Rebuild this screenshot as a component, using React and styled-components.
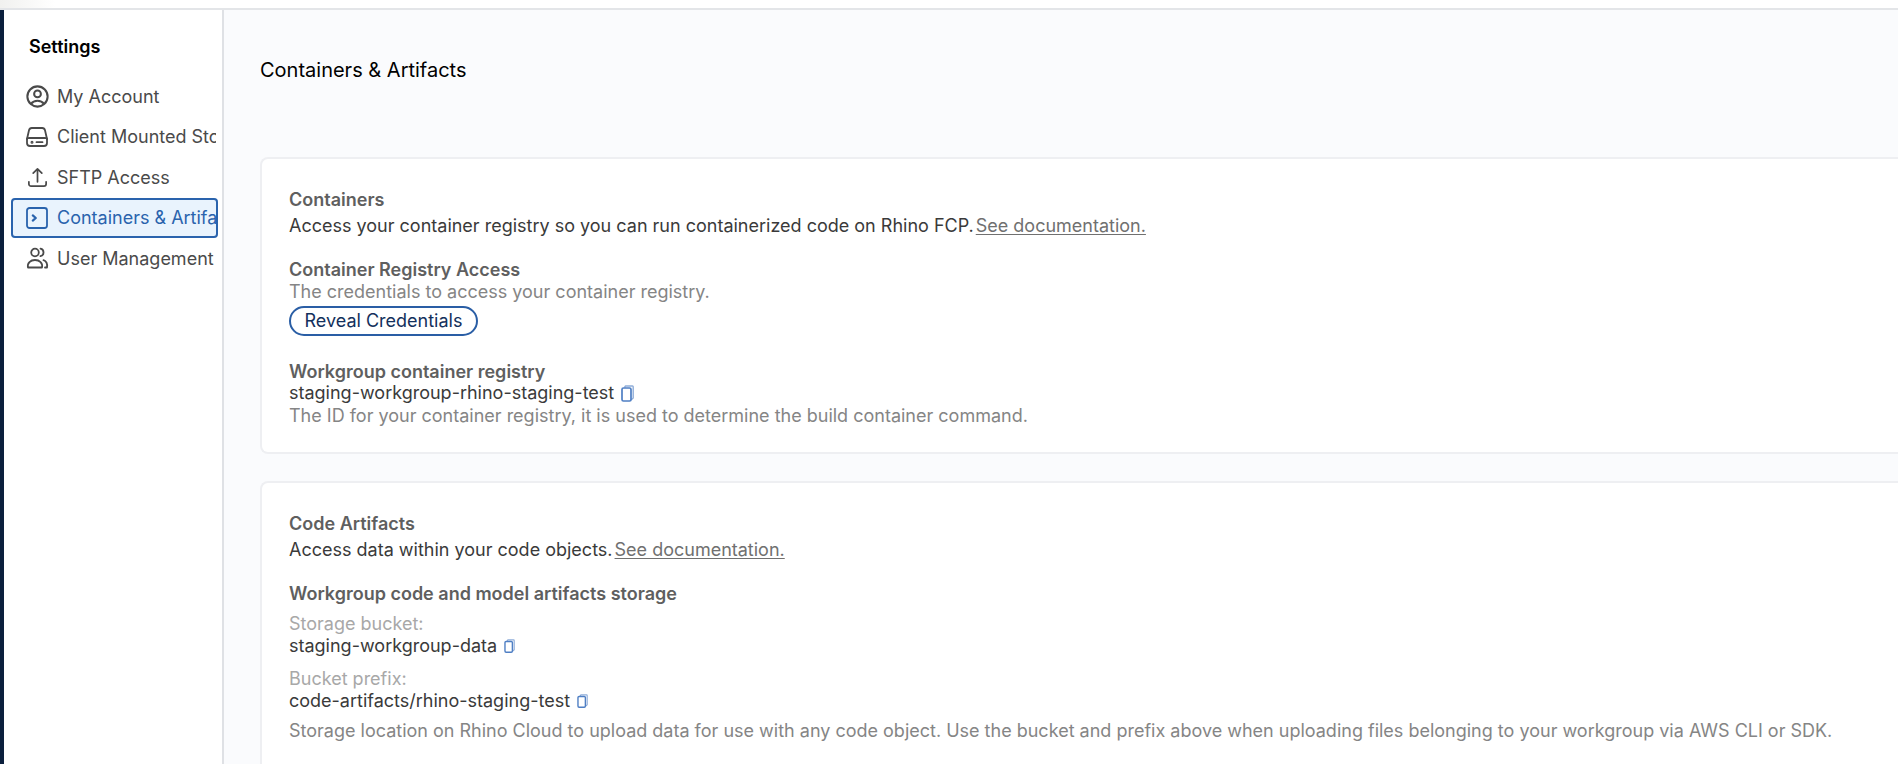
import React from "react";
import styled, { createGlobalStyle } from "styled-components";
import { HiOutlineUserCircle, HiOutlineArrowUpTray } from "react-icons/hi2";

const Global = createGlobalStyle`
  html, body { margin: 0; padding: 0; height: 764px; overflow: hidden; background: #fff; }
  * { box-sizing: border-box; }
  body { font-family: Inter, "Liberation Sans", sans-serif; -webkit-font-smoothing: antialiased; }
`;
const Page = styled.div`
  height: 764px; display: flex; flex-direction: column; overflow: hidden;
`;
const TopBar = styled.header`
  height: 10px; flex: none; background: linear-gradient(90deg, #f1f1ef, #fff 55px); border-bottom: 2px solid #e3e5e8;
`;
const Body = styled.div`
  flex: 1; display: flex; min-height: 0;
`;
const Rail = styled.div`
  width: 4px; flex: none; background: #0b1f3d;
`;
const Sidebar = styled.nav`
  width: 220px; flex: none; background: #fff; border-right: 2px solid #dfe1e5;
  padding: 27px 4px 0 7px;
`;
const SideTitle = styled.h2`
  margin: 0 0 19px 18px; font-size: 18px; line-height: 20px; font-weight: 600; color: #000;
`;
const NavList = styled.div`
  display: flex; flex-direction: column;
`;
const NavItem = styled.div`
  height: 40.5px; display: flex; align-items: center; gap: 6.5px; padding: 0 2px 0 12.5px;
  font-size: 18px; white-space: nowrap;
  color: ${p => (p.$active ? "#2a63ad" : "#4a4a4a")};
  background: ${p => (p.$active ? "#e9f3fd" : "transparent")};
  border-radius: 4px;
  outline: ${p => (p.$active ? "2px solid #2a63ad" : "none")};
  outline-offset: -2px;
`;
const NavIcon = styled.span`
  width: 27px; height: 27px; flex: none; display: flex; align-items: center; justify-content: center;
  & > svg { stroke-width: 1.8; }
`;
const NavLabel = styled.span`
  flex: 1; min-width: 0; overflow: hidden;
`;
const Main = styled.main`
  flex: 1; min-width: 0; background: #fafbfd; padding: 47px 0 0 36px; overflow: hidden;
`;
const PageTitle = styled.h1`
  margin: 0 0 74px; font-size: 20px; line-height: 26px; font-weight: 400; color: #000;
`;
const Card = styled.section`
  background: #fff; border: 2px solid #eeeff2; border-right: none; border-radius: 8px 0 0 8px;
  padding: 30px 0 0 27px; margin-bottom: 27px; height: ${p => p.$h};
`;
const Heading = styled.div`
  font-size: 18px; line-height: 22px; font-weight: 600; color: #5f5f5f; margin-top: ${p => p.$top || 0};
`;
const Text = styled.div`
  font-size: 18px; line-height: 22px; color: #3a3a3a; margin-top: ${p => p.$top || 0};
  display: flex; align-items: center;
`;
const Muted = styled.div`
  font-size: 18px; line-height: 22px; color: #858585; margin-top: ${p => p.$top || 0};
`;
const Label = styled.div`
  font-size: 18px; line-height: 22px; color: #a8a8a8; margin-top: ${p => p.$top || 0};
`;
const DocLink = styled.a`
  color: #707070; text-decoration: underline; margin-left: 2px;
  text-underline-offset: 2px;
`;
const Pill = styled.button`
  display: block; margin-top: 3px; height: 30px; width: 189px; padding: 0; border: 2px solid #2a5ea5; border-radius: 15px;
  background: #fff; color: #13305c; font: 400 18px/26px Inter, sans-serif;
`;
const CopyMark = styled.svg`
  width: ${p => (p.$small ? 11 : 13)}px; height: ${p => (p.$small ? 14 : 17)}px;
  margin-left: 7px; flex: none;
`;
const Copy = ({ small }) => (
  <CopyMark $small={small} viewBox="0 0 13 17" fill="none">
    <path d="M3.5 2.5 L4.5 1 H11.5 Q12.2 1 12.2 1.8 V13 L10 15" stroke="#8fadd9" strokeWidth="1.4" strokeLinejoin="round" />
    <rect x="1" y="3" width="9" height="13" rx="1.4" stroke="#4f7fc4" strokeWidth="1.7" />
  </CopyMark>
);
const Drawn = styled.svg`
  width: 22px; height: ${p => p.$h || 22}px; overflow: visible;
  fill: none; stroke: currentColor; stroke-linecap: round; stroke-linejoin: round;
`;
const DriveIcon = () => (
  <Drawn viewBox="0 0 22 20" $h={20}>
    <path d="M1 12 L3 3.2 Q3.5 1 5.8 1 H16.2 Q18.5 1 19 3.2 L21 12 V16 Q21 19 18 19 H4 Q1 19 1 16 Z" />
    <path d="M1 12 Q1 11 3 11 H19 Q21 11 21 12" />
    <circle cx="6" cy="15.2" r=".6" />
    <path d="M10.5 15.2 H16.5" />
  </Drawn>
);
const TerminalIcon = () => (
  <Drawn viewBox="0 0 22 22">
    <rect x="1" y="1" width="20" height="20" rx="2.5" />
    <path d="M6.8 8.4 L9.8 11 L6.8 13.6" strokeWidth="2.2" />
  </Drawn>
);
const PeopleIcon = () => (
  <Drawn viewBox="0 0 22 22">
    <circle cx="9" cy="5.5" r="3.8" />
    <path d="M2 20.5 C1 16 4.5 13 9 13 S17 16 16 20.5 Z" />
    <path d="M14.5 1.6 A3.9 3.9 0 0 1 14.5 9.2" />
    <path d="M17.5 13.2 C20 14 21.5 17 21 20.5 H19" />
  </Drawn>
);

const items = [
  ["My Account", <HiOutlineUserCircle size={27} />],
  ["Client Mounted Storage", <DriveIcon />],
  ["SFTP Access", <HiOutlineArrowUpTray size={23} />],
  ["Containers & Artifacts", <TerminalIcon />, true],
  ["User Management", <PeopleIcon />],
];

export default function App() {
  return (
    <Page>
      <Global />
      <TopBar />
      <Body>
        <Rail />
        <Sidebar>
          <SideTitle>Settings</SideTitle>
          <NavList>
            {items.map(([t, icon, a]) => (
              <NavItem key={t} $active={a}><NavIcon>{icon}</NavIcon><NavLabel>{t}</NavLabel></NavItem>
            ))}
          </NavList>
        </Sidebar>
        <Main>
          <PageTitle>Containers &amp; Artifacts</PageTitle>
          <Card $h="297px">
            <Heading>Containers</Heading>
            <Text $top="4px">Access your container registry so you can run containerized code on Rhino FCP.<DocLink>See documentation.</DocLink></Text>
            <Heading $top="22px">Container Registry Access</Heading>
            <Muted>The credentials to access your container registry.</Muted>
            <Pill>Reveal Credentials</Pill>
            <Heading $top="25px">Workgroup container registry</Heading>
            <Text $top="-1px">staging-workgroup-rhino-staging-test<Copy /></Text>
            <Muted $top="1px">The ID for your container registry, it is used to determine the build container command.</Muted>
          </Card>
          <Card $h="330px">
            <Heading>Code Artifacts</Heading>
            <Text $top="4px">Access data within your code objects.<DocLink>See documentation.</DocLink></Text>
            <Heading $top="22px">Workgroup code and model artifacts storage</Heading>
            <Label $top="8px">Storage bucket:</Label>
            <Text>staging-workgroup-data<Copy small /></Text>
            <Label $top="11px">Bucket prefix:</Label>
            <Text>code-artifacts/rhino-staging-test<Copy small /></Text>
            <Muted $top="8px">Storage location on Rhino Cloud to upload data for use with any code object. Use the bucket and prefix above when uploading files belonging to your workgroup via AWS CLI or SDK.</Muted>
          </Card>
        </Main>
      </Body>
    </Page>
  );
}
